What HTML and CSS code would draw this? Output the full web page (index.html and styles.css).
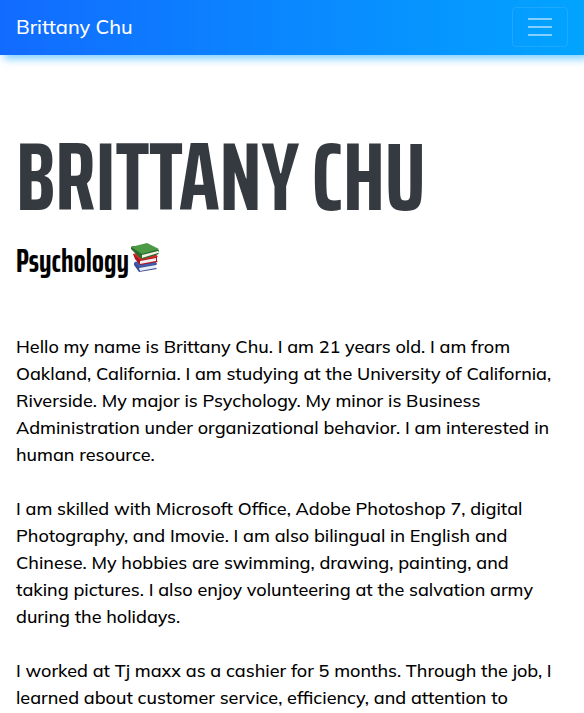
FILE: index.html
```html
<!DOCTYPE html>
<html lang="en">
<head>
<meta charset="utf-8">
<meta name="viewport" content="width=device-width, initial-scale=1">
<title>Brittany Chu</title>
<link rel="stylesheet" href="styles.css">
</head>
<body>
<nav class="navbar">
  <a class="brand" href="#about">Brittany Chu</a>
  <button class="toggler" type="button" aria-label="Toggle navigation">
    <svg class="toggler-icon" viewBox="0 0 30 30" aria-hidden="true"><path d="M4 7h22M4 15h22M4 23h22"/></svg>
  </button>
</nav>
<main class="about" id="about">
  <h1 class="name">Brittany Chu</h1>
  <h2 class="major">Psychology<svg class="books" viewBox="0 0 30 30" aria-hidden="true">
    <path fill="#3a4f96" d="M4 21l19-3 4 4-1 1v3l1 1-18 3-5-7z"/>
    <path fill="#e9edf5" d="M9 26l17-3v3L10 29z"/>
    <path fill="#3f5fb5" d="M4 20l19-3 4 5-18 3z"/>
    <path fill="#a9141b" d="M3 12l20-3 4 5v5l1 1-18 3-5-6z"/>
    <path fill="#f4eeee" d="M10 19l16-3v3l-16 3z"/>
    <path fill="#d8282c" d="M3 12l20-3 5 6-18 3z"/>
    <path fill="#2c6b2a" d="M1 5l2-1 24 3 2 1-1 3 1 1-16 5-3-1L1 7z"/>
    <path fill="#f3f3e8" d="M12 13l16-4v2l-16 5z"/>
    <path fill="#4b9a45" d="M1 5L17 1l12 6-17 5z"/>
  </svg></h2>
  <p>Hello my name is Brittany Chu. I am 21 years old. I am from<br>Oakland, California. I am studying at the University of California,<br>Riverside. My major is Psychology. My minor is Business<br>Administration under organizational behavior. I am interested in<br>human resource.</p>
  <p>I am skilled with Microsoft Office, Adobe Photoshop 7, digital<br>Photography, and Imovie. I am also bilingual in English and<br>Chinese. My hobbies are swimming, drawing, painting, and<br>taking pictures. I also enjoy volunteering at the salvation army<br>during the holidays.</p>
  <p>I worked at Tj maxx as a cashier for 5 months. Through the job, I<br>learned about customer service, efficiency, and attention to</p>
</main>
</body>
</html>
```
FILE: styles.css
```css
* {
  box-sizing: border-box;
}

body {
  margin: 0;
  overflow: hidden;
  background: #fff;
  color: #000;
  font: 500 18px/27px Mulish, Muli, Lato, sans-serif;
}

.navbar {
  display: flex;
  align-items: center;
  justify-content: space-between;
  padding: 7px 16px 8px;
  background: linear-gradient(to right, #126bff, #02a4ff);
  box-shadow: 4px 4px 8px rgba(2, 164, 255, 0.5);
}

.brand {
  color: #fff;
  font-size: 20px;
  line-height: 30px;
  text-decoration: none;
}

.toggler {
  display: flex;
  align-items: center;
  justify-content: center;
  width: 56px;
  height: 40px;
  padding: 0;
  border: 1px solid rgba(255, 255, 255, 0.1);
  border-radius: 4px;
  background: transparent;
}

.toggler-icon {
  width: 30px;
  height: 30px;
  fill: none;
  stroke: rgba(255, 255, 255, 0.5);
  stroke-width: 2;
  stroke-linecap: square;
}

.about {
  padding: 72px 16px 0;
}

.name,
.major {
  font-family: "Saira Extra Condensed", "Saira ExtraCondensed", "Saira Condensed", "Saira", "Oswald", "Open Sans Condensed", sans-serif;
  font-weight: 700;
}

.name {
  margin: 0;
  color: #343a40;
  font-size: 96px;
  line-height: 100px;
  text-transform: uppercase;
  white-space: nowrap;
}

.major {
  display: flex;
  align-items: center;
  margin: 13px 0 51px;
  font-size: 32px;
  line-height: 42px;
}

.books {
  width: 30px;
  height: 30px;
  margin: 0 0 8px 1px;
}

p {
  margin: 0 0 27px;
  white-space: nowrap;
}
```
